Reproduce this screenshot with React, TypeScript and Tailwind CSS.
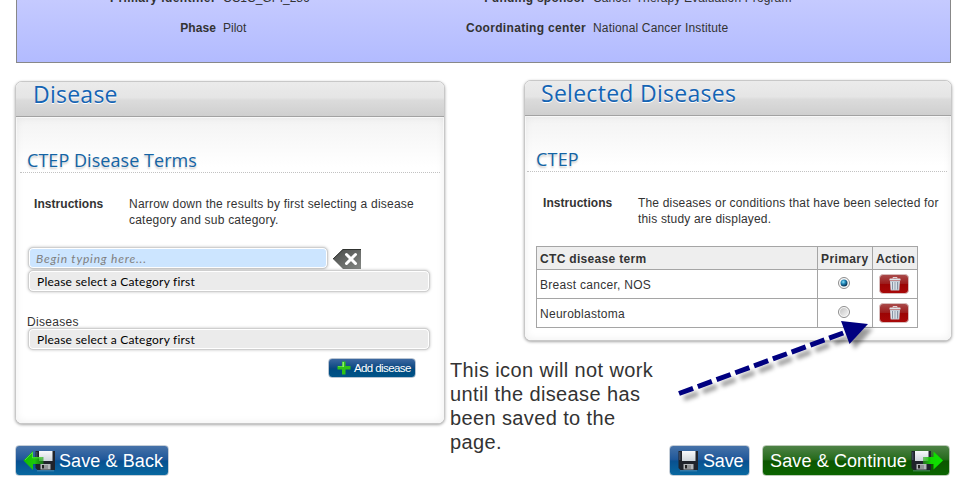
import React from "react";

const sans = "font-['Liberation_Sans',sans-serif]";
const heading = "font-['Open_Sans','Lato',sans-serif]";

function FloppyBody() {
  return (
    <g>
      <defs>
        <linearGradient id="paper" x1="0" y1="0" x2="0" y2="1">
          <stop offset="0" stopColor="#f8f9fb" />
          <stop offset="1" stopColor="#cfd6dc" />
        </linearGradient>
      </defs>
      <path d="M.5 1H20V20H2.500L.5 18Z" fill="#20232b" />
      <path d="M1 2H2.500V10H1Z" fill="#3d4658" />
      <rect x="4" y="1" width="13.500" height="10" fill="url(#paper)" />
      <rect x="5.500" y="14" width="10" height="5.500" fill="#b4b7ba" />
      <rect x="7" y="15" width="2" height="3.500" fill="#222" />
      <path d="M10 15V19M12 15V19" stroke="#555" strokeWidth=".7" />
      <rect x="2" y="20" width="17" height="1.500" fill="#86a9c0" opacity=".35" />
    </g>
  );
}

function Floppy() {
  return (
    <svg viewBox="0 0 21 22" className="h-[22px] w-[21px]">
      <FloppyBody />
    </svg>
  );
}

function FloppyBack() {
  return (
    <svg viewBox="0 0 33 22" className="h-[22px] w-[33px]">
      <defs>
        <linearGradient id="arrowBack" x1="0" y1="0" x2="1" y2="0">
          <stop offset="0" stopColor="#14bc00" />
          <stop offset=".55" stopColor="#1cc80a" />
          <stop offset="1" stopColor="#1a9a10" stopOpacity=".6" />
        </linearGradient>
      </defs>
      <g transform="translate(12 0)"><FloppyBody /></g>
      <path d="M0.500 10.500L10 1V7H20.500V14H10V20Z" fill="url(#arrowBack)" />
      <path d="M2 10L9.500 2.500V7.800H19" fill="none" stroke="#6af04c" strokeWidth=".9" opacity=".7" />
    </svg>
  );
}

function FloppyNext() {
  return (
    <svg viewBox="0 0 33 22" className="h-[22px] w-[33px]">
      <defs>
        <linearGradient id="arrowNext" x1="0" y1="0" x2="1" y2="0">
          <stop offset="0" stopColor="#2ca51c" stopOpacity=".6" />
          <stop offset=".4" stopColor="#12d800" />
          <stop offset="1" stopColor="#0ce500" />
        </linearGradient>
      </defs>
      <FloppyBody />
      <path d="M12 7H22.500V1.500L32 10.500L22.500 19.500V14H12Z" fill="url(#arrowNext)" />
    </svg>
  );
}

function Plus() {
  return (
    <svg viewBox="0 0 14 14" className="h-[14px] w-[14px] shrink-0">
      <path d="M5 0.500H8.500V5H13.500V8.500H8.500V13.500H5V8.500H0.500V5H5Z" fill="#2fc315" />
      <path d="M5.500 1H7V6H1V5.500H5.500Z" fill="#8cf06c" />
    </svg>
  );
}

function ClearIcon() {
  return (
    <svg viewBox="0 0 28 20" className="mt-px h-5 w-7">
      <defs>
        <linearGradient id="clear" x1="0" y1="0" x2="1" y2="1">
          <stop offset="0" stopColor="#474947" />
          <stop offset="1" stopColor="#858885" />
        </linearGradient>
      </defs>
      <path d="M0 10L10 0H28V20H10Z" fill="url(#clear)" />
      <path d="M0 10L10 .5H28" fill="none" stroke="#303330" />
      <path d="M13.500 5.500L22.500 14.500M22.500 5.500L13.500 14.500" stroke="#fff" strokeWidth="3" strokeLinecap="round" />
    </svg>
  );
}

function Trash() {
  return (
    <svg viewBox="0 0 12 14" className="h-[14px] w-3">
      <path d="M4 1.500V.5H8V1.500" fill="none" stroke="#e3d4d8" />
      <rect x=".5" y="1.500" width="11" height="2" rx=".6" fill="#dfe3e8" />
      <path d="M1 4H11L10.300 13.500H1.700Z" fill="#c4ccd6" />
      <path d="M3.500 5V12.500M6 5V12.500M8.500 5V12.500" stroke="#7f8d9f" strokeWidth=".9" />
      <path d="M2.300 5V12.500M4.800 5V12.500M7.200 5V12.500" stroke="#eef2f6" strokeWidth=".8" />
    </svg>
  );
}

function Radio({ checked }: { checked?: boolean }) {
  return (
    <svg viewBox="0 0 12 12" className="h-3 w-3">
      <defs>
        <radialGradient id="dot" cx=".4" cy=".35" r=".6">
          <stop offset="0" stopColor="#8fe2f8" />
          <stop offset=".5" stopColor="#2086b8" />
          <stop offset="1" stopColor="#0b3a5c" />
        </radialGradient>
        <linearGradient id="hollow" x1="0" y1="0" x2="1" y2="1">
          <stop offset="0" stopColor="#c3c3c3" />
          <stop offset="1" stopColor="#f4f4f4" />
        </linearGradient>
      </defs>
      <circle cx="6" cy="6" r="5.500" fill="#fafafa" stroke="#8c8c8c" />
      {checked ? <circle cx="6" cy="6" r="3.500" fill="url(#dot)" /> : <circle cx="6" cy="6" r="4" fill="url(#hollow)" />}
    </svg>
  );
}

function Panel({ title, titleClass, className, children }: { title: string; titleClass: string; className: string; children: React.ReactNode }) {
  return (
    <section className={`flex flex-col rounded-[7px] border border-[#c8c8c8] bg-white shadow-[0_1px_3px_rgba(0,0,0,0.35)] ${className}`}>
      <header className={`flex h-[35px] shrink-0 items-start rounded-t-[6px] border-b border-[#a2a2a2] bg-[linear-gradient(#ebebeb,#e5e5e5_46%,#dbdbdb_54%,#cfcfcf)] ${titleClass}`}>
        <h1 className={`${heading} whitespace-nowrap text-[23px] leading-[25px] text-[#1464b4] [text-shadow:0_1px_0_#fff]`}>{title}</h1>
      </header>
      <div className="flex grow flex-col rounded-b-[6px] bg-[linear-gradient(#f3f3f3,#ffffff_50px)] shadow-[inset_0_0_8px_rgba(0,0,0,0.07),inset_0_0_0_1px_#fff]">
        {children}
      </div>
    </section>
  );
}

function SelectBox() {
  return (
    <div className="ml-3 flex h-[22px] w-[402px] shrink-0 items-center rounded-[5px] border border-[#cfcfcf] bg-[#ebebeb] pl-2 pt-[2px] shadow-[inset_0_0_0_1px_#fff,0_0_3px_rgba(0,0,0,0.25)]">
      <span className="font-['Lato',sans-serif] text-[12px] leading-4 tracking-[0.22px] text-black">Please select a Category first</span>
    </div>
  );
}

function Row({ name, checked }: { name: string; checked?: boolean }) {
  return (
    <tr className="h-[29px]">
      <td className="border border-[#a5a5a5] pl-[3px] pt-px tracking-[0.28px]">{name}</td>
      <td className="border border-[#a5a5a5]">
        <div className="flex justify-center pb-[3px] pr-[2px]"><Radio checked={checked} /></div>
      </td>
      <td className="border border-[#a5a5a5]">
        <div className="flex justify-center pr-[2px]">
          <button className="flex h-5 w-[30px] items-center justify-center rounded-[4px] border border-[#d8bcbc] bg-[linear-gradient(#a94a4a,#9c1c1c_48%,#9c0404_52%,#a80808)] pl-px"><Trash /></button>
        </div>
      </td>
    </tr>
  );
}

export default function App() {
  return (
    <div className={`relative h-[490px] w-[967px] overflow-hidden bg-white ${sans} text-[12px] leading-4 text-[#333]`}>
      <div className="ml-4 flex h-[63px] w-[935px] border border-t-0 border-[#888] bg-[linear-gradient(#c5caff,#b2bbff)]">
        <div className="-mt-[10px] flex w-[429px] flex-col gap-[14px]">
          <div className="flex gap-[7px]"><b className="w-[199px] text-right tracking-[0.4px]">Primary identifier</b><span>CC1C_GPI_286</span></div>
          <div className="flex gap-[7px]"><b className="w-[199px] text-right tracking-[0.1px]">Phase</b><span>Pilot</span></div>
        </div>
        <div className="-mt-[10px] flex flex-col gap-[14px]">
          <div className="flex gap-[7px]"><b className="w-[140px] text-right tracking-[0.25px]">Funding sponsor</b><span className="tracking-[0.12px]">Cancer Therapy Evaluation Program</span></div>
          <div className="flex gap-[7px]"><b className="w-[140px] text-right tracking-[0.32px]">Coordinating center</b><span className="tracking-[0.16px]">National Cancer Institute</span></div>
        </div>
      </div>

      <main className="mt-[17px] flex h-[344px] items-start">
        <Panel title="Disease" titleClass="pl-[17px] tracking-[0.25px]" className="ml-[15px] mt-px h-[343px] w-[430px]">
          <h2 className={`${heading} ml-1 mt-[33px] h-[23px] w-[420px] border-b border-dotted border-[#c2c2c2] pl-[7px] text-[18px] leading-[20px] tracking-[0.05px] text-[#1464a4] [text-shadow:0_2px_2px_#ccc]`}>CTEP Disease Terms</h2>
          <div className="ml-[18px] mt-[23px] flex">
            <b className="w-[95px] tracking-[0.05px]">Instructions</b>
            <p className="whitespace-nowrap tracking-[0.22px]">Narrow down the results by first selecting a disease<br />category and sub category.</p>
          </div>
          <div className="ml-3 mt-[19px] flex h-[22px] items-center gap-[5px]">
            <div className="flex h-[22px] w-[300px] items-center rounded-[5px] border border-[#cfcfcf] bg-[#cce5ff] pl-[7px] pt-px shadow-[inset_0_0_0_1px_#fff,0_0_3px_rgba(0,0,0,0.25)]">
              <span className="font-['Lato',sans-serif] text-[12px] italic tracking-[0.8px] text-[#808080]">Begin typing here...</span>
            </div>
            <ClearIcon />
          </div>
          <div className="h-px" />
          <SelectBox />
          <span className="ml-[11px] mt-[22px] tracking-[0.3px]">Diseases</span>
          <div className="-mt-[2px] flex"><SelectBox /></div>
          <button className="ml-[312px] mt-2 flex h-5 w-[88px] shrink-0 items-center gap-[3px] rounded-[4px] border border-[#b8c4d2] bg-[linear-gradient(#3c68a0,#0c4882_50%,#004a80_55%,#005488)] pb-px pl-2 text-white">
            <Plus /><span className="whitespace-nowrap text-[11.5px] tracking-[-0.6px]">Add disease</span>
          </button>
        </Panel>

        <Panel title="Selected Diseases" titleClass="pl-[16px] tracking-[0.28px]" className="ml-[79px] h-[261px] w-[428px]">
          <h2 className={`${heading} ml-[2px] mt-[33px] h-[23px] w-[420px] border-b border-dotted border-[#c2c2c2] pl-[9px] text-[18px] leading-[20px] tracking-[0.2px] text-[#1464a4] [text-shadow:0_2px_2px_#ccc]`}>CTEP</h2>
          <div className="ml-[18px] mt-[23px] flex">
            <b className="w-[95px] tracking-[0.05px]">Instructions</b>
            <p className="whitespace-nowrap tracking-[0.18px]">The diseases or conditions that have been selected for<br />this study are displayed.</p>
          </div>
          <table className="ml-[11px] mt-[19px] w-[381px] table-fixed border-collapse text-left">
            <colgroup><col className="w-[281px]" /><col className="w-[55px]" /><col className="w-[45px]" /></colgroup>
            <thead>
              <tr className="h-[23px] bg-[#eee]">
                <th className="border border-[#a5a5a5] pl-[3px] pt-px tracking-[0.32px]">CTC disease term</th>
                <th className="border border-[#a5a5a5] pl-[3px] pt-px tracking-[0.4px]">Primary</th>
                <th className="border border-[#a5a5a5] pl-[3px] pt-px tracking-[0.3px]">Action</th>
              </tr>
            </thead>
            <tbody>
              <Row name="Breast cancer, NOS" checked />
              <Row name="Neuroblastoma" />
            </tbody>
          </table>
        </Panel>
      </main>

      <footer className="mt-[21px] flex items-center pl-[15px] text-[18px] leading-[30px] text-white">
        <button className="flex h-[31px] w-[154px] items-center gap-[3px] whitespace-nowrap rounded-[4px] border border-[#c5ced8] bg-[linear-gradient(#4672a8,#20589a_46%,#085090_52%,#0868a0)] pl-[7px]">
          <FloppyBack /><span className="tracking-[0.1px]">Save &amp; Back</span>
        </button>
        <button className="ml-[500px] flex h-[31px] w-[81px] items-center gap-1 whitespace-nowrap rounded-[4px] border border-[#c5ced8] bg-[linear-gradient(#4672a8,#20589a_46%,#085090_52%,#0868a0)] pl-2">
          <Floppy /><span className="tracking-[-0.15px]">Save</span>
        </button>
        <button className="ml-3 flex h-[31px] w-[188px] items-center gap-[5px] whitespace-nowrap rounded-[4px] border border-[#bccbb8] bg-[linear-gradient(#4e8246,#266b1c_46%,#0c5500_52%,#0a6400)] pl-[7px]">
          <span className="w-[136px] text-left tracking-[0.12px]">Save &amp; Continue</span><FloppyNext />
        </button>
      </footer>

      <p className="absolute left-[450px] top-[358px] whitespace-nowrap text-[20px] leading-6 tracking-[0.38px]">This icon will not work<br />until the disease has<br />been saved to the<br />page.</p>
      <svg className="absolute left-[660px] top-[300px] h-[110px] w-[230px]" viewBox="660 300 230 110">
        <g className="[filter:drop-shadow(5px_5px_2px_rgba(0,0,0,0.4))]">
          <path d="M679 393.500L846 332" stroke="#000080" strokeWidth="5" strokeDasharray="15 5" fill="none" />
          <path d="M841 321L868 324L849.500 344Z" fill="#000080" />
        </g>
      </svg>
    </div>
  );
}
